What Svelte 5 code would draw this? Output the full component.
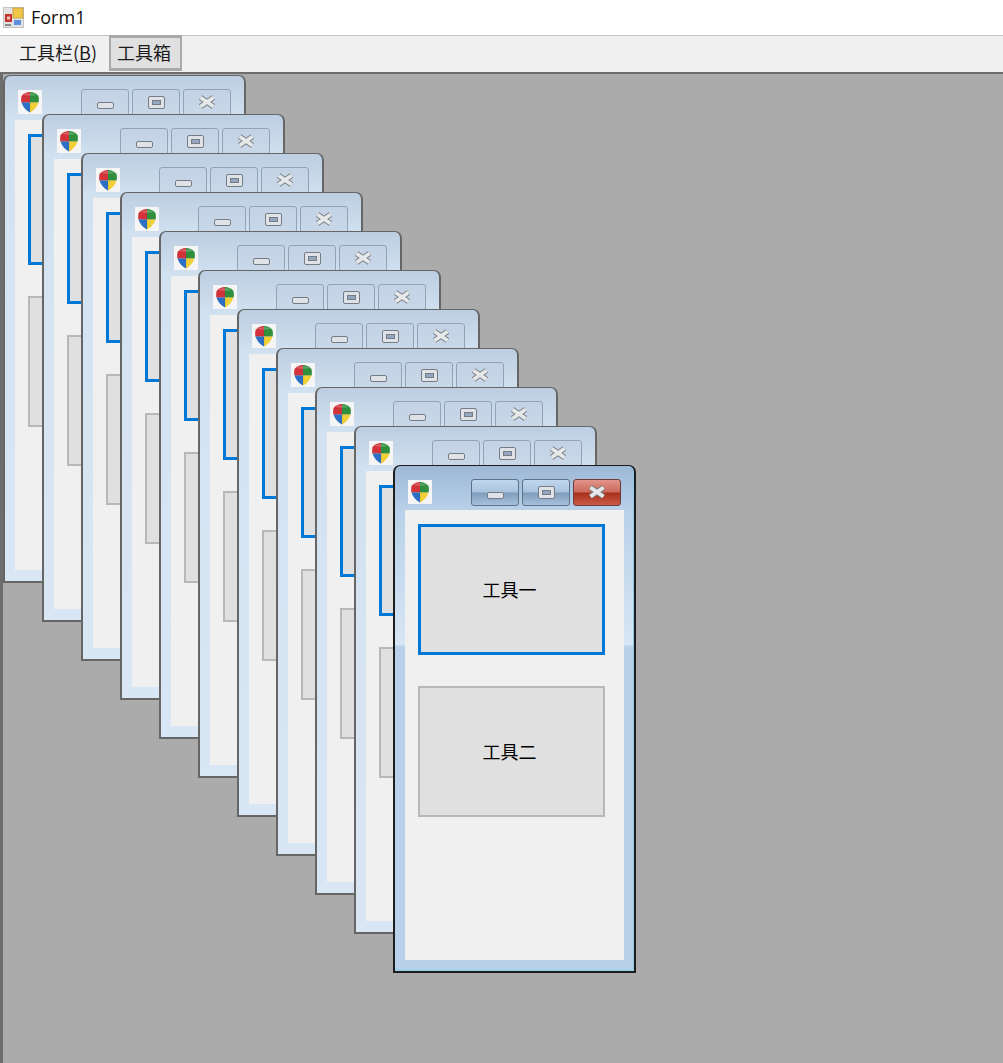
<script>
  const windows = Array.from({ length: 11 }, (_, i) => ({ id: i, active: i === 10, left: i * 39, top: 1 + i * 39 }));
</script>

{#snippet shield()}
  <svg class="shield" viewBox="0 0 24 24" aria-hidden="true">
    <rect width="24" height="24" fill="#f5f5f5" />
    <g class="crest">
      <path d="M12 2 C8.500 2 5 4 3.500 6 C3 9 3 11 3.500 12.500 H12 Z" fill="#d2333a" />
      <path d="M12 2 C15.500 2 19 4 20.500 6 C21 9 21 11 20.500 12.500 H12 Z" fill="#2f8f3c" />
      <path d="M3.500 12.500 C5 17 8 20.500 12 22.500 V12.500 Z" fill="#2c6fc6" />
      <path d="M20.500 12.500 C19 17 16 20.500 12 22.500 V12.500 Z" fill="#f0d035" />
      <path d="M12 2 V22.500 M3.500 12.500 H20.500" stroke="#4a4a4a" stroke-width="0.5" opacity="0.3" />
      <path d="M5 5 C8 2.800 16 2.800 19 5 C15 6 9 6 5 5 Z" fill="#fff" opacity="0.2" />
    </g>
  </svg>
{/snippet}

<div class="form">
  <header class="titlebar">
    <svg class="appicon" viewBox="0 0 21 21" aria-hidden="true">
      <rect x="0.500" y="0.500" width="20" height="20" fill="#e2e2e2" stroke="#c4c4c4" />
      <rect x="10" y="1" width="10" height="10" fill="#f2c646" stroke="#b99a3a" stroke-width="0.8" />
      <rect x="2" y="7" width="7" height="8" fill="#c5352d" />
      <rect x="4" y="9.500" width="3" height="3" fill="#eec6be" />
      <rect x="11" y="13" width="7" height="5" fill="#5a90de" />
      <rect x="2" y="17" width="6" height="2" fill="#8c8c8c" />
    </svg>
    <span class="caption">Form1</span>
  </header>

  <nav class="menubar">
    <span class="menuitem">工具栏(<u>B</u>)</span>
    <span class="menuitem open">工具箱</span>
  </nav>

  <main class="mdi">
    {#each windows as w (w.id)}
      <section class="win" class:active={w.active} style="left:{w.left}px;top:{w.top}px">
        <div class="head">
          {@render shield()}
          <div class="controls">
            <span class="ctl"><i class="min"></i></span>
            <span class="ctl"><i class="max"></i></span>
            <span class="ctl close">
              <svg viewBox="0 0 20 14" class="x" aria-hidden="true">
                <path d="M3.500 2.500 L16.500 11.500 M16.500 2.500 L3.500 11.500" class="xo" />
                <path d="M3.500 2.500 L16.500 11.500 M16.500 2.500 L3.500 11.500" class="xi" />
              </svg>
            </span>
          </div>
        </div>
        <div class="client">
          <button class="tool first">工具一</button>
          <button class="tool">工具二</button>
        </div>
      </section>
    {/each}
  </main>
</div>

<style>
  :global(body) {
    margin: 0;
    background: #fff;
  }
  .form {
    width: 1003px;
    height: 1063px;
    display: flex;
    flex-direction: column;
    overflow: hidden;
    font-family: "Noto Sans CJK SC", "Noto Sans", sans-serif;
  }
  .titlebar {
    height: 36px;
    flex: none;
    display: flex;
    align-items: center;
    gap: 7px;
    padding-left: 3px;
    box-sizing: border-box;
    background: #fff;
    border-bottom: 1px solid #c4c4c4;
  }
  .appicon {
    width: 21px;
    height: 21px;
  }
  .caption {
    font-family: "Open Sans", sans-serif;
    font-size: 18px;
    color: #111;
    margin-bottom: 2px;
  }
  .menubar {
    height: 36px;
    flex: none;
    display: flex;
    align-items: stretch;
    box-sizing: border-box;
    background: #f0f0f0;
    padding-left: 2px;
    color: #1c1c1c;
    font-size: 18px;
    line-height: 32px;
  }
  .menuitem {
    padding: 0 10px 0 17px;
  }
  .menuitem.open {
    padding: 0 9px 0 6px;
    margin: -1px 0 1px 2px;
    background: #e0e0e0;
    border: 2px solid #a9a9a9;
    border-top-width: 3px;
    border-bottom-width: 3px;
    line-height: 29px;
    box-sizing: border-box;
  }
  .mdi {
    position: relative;
    flex: 1;
    background: #ababab;
    border-top: 2px solid #6d6d6d;
    border-left: 3px solid #6d6d6d;
    box-sizing: border-box;
    overflow: hidden;
  }
  .win {
    position: absolute;
    width: 243px;
    height: 508px;
    box-sizing: border-box;
    border: 2px solid #666;
    border-top-width: 1px;
    border-radius: 7px 7px 0 0;
    padding: 0 10px 11px;
    display: flex;
    flex-direction: column;
    background: linear-gradient(#bccee1 0, #d3e2f1 44px, #d9e6f4 100%);
  }
  .win.active {
    border-color: #1d1d1d;
    background: linear-gradient(#9db8d6 0, #b9d1e9 44px, #b9d1e9 46px, #d7e6f5 179px, #b9d1e9 180px, #b9d1e9 100%);
    box-shadow: inset 0 -2px 0 #9fd0ea, inset -1px 0 0 #8ccbe8;
  }
  .head {
    height: 44px;
    flex: none;
    position: relative;
  }
  .shield {
    position: absolute;
    left: 3px;
    top: 14px;
    width: 24px;
    height: 24px;
  }
  .crest {
    filter: blur(0.4px);
  }
  .controls {
    position: absolute;
    right: 3px;
    top: 13px;
    display: flex;
    gap: 3px;
  }
  .ctl {
    width: 48px;
    height: 27px;
    box-sizing: border-box;
    border: 1px solid #93a3b6;
    border-radius: 3px 3px 0 0;
    background: linear-gradient(#c3d3e5, #c8d8e9);
    display: flex;
    align-items: center;
    justify-content: center;
    padding-top: 1px;
  }
  .active .ctl {
    border-color: #5f7186;
    border-radius: 3px;
    background: linear-gradient(#c2d7ee 0, #a9c3de 48%, #7f9cbb 52%, #a7c1dc 100%);
  }
  .active .ctl.close {
    border-color: #6e3b3b;
    background: linear-gradient(#e3948a 0, #c96a5c 48%, #a8301d 52%, #c85a46 100%);
  }
  .min {
    display: block;
    width: 17px;
    height: 7px;
    box-sizing: border-box;
    margin-top: 5px;
    background: #dfe2e6;
    border: 1px solid #767c85;
    border-radius: 2px;
  }
  .max {
    display: flex;
    align-items: center;
    justify-content: center;
    width: 17px;
    height: 13px;
    box-sizing: border-box;
    margin-top: -1px;
    background: #dfe2e6;
    border: 1px solid #767c85;
    border-radius: 2px;
  }
  .max::after {
    content: "";
    width: 9px;
    height: 5px;
    box-sizing: border-box;
    background: #93a8c0;
    border: 1px solid #767c85;
  }
  .x {
    width: 20px;
    height: 14px;
    margin-top: -2px;
  }
  .xo {
    stroke: #73797f;
    stroke-width: 5.500;
    fill: none;
  }
  .xi {
    stroke: #e6e8ea;
    stroke-width: 3.800;
    fill: none;
  }
  .client {
    flex: 1;
    background: #f0f0f0;
    padding: 14px 19px 0 13px;
    display: flex;
    flex-direction: column;
    gap: 31px;
    min-height: 0;
  }
  .tool {
    display: block;
    width: 187px;
    height: 131px;
    flex: none;
    box-sizing: border-box;
    margin: 0;
    padding: 0 4px 2px 0;
    border: 2px solid #b8b8b8;
    background: #e0e0e0;
    color: #000;
    font-family: "Noto Sans CJK SC", sans-serif;
    font-size: 18px;
  }
  .tool.first {
    border: 3px solid #0078d7;
  }
</style>
